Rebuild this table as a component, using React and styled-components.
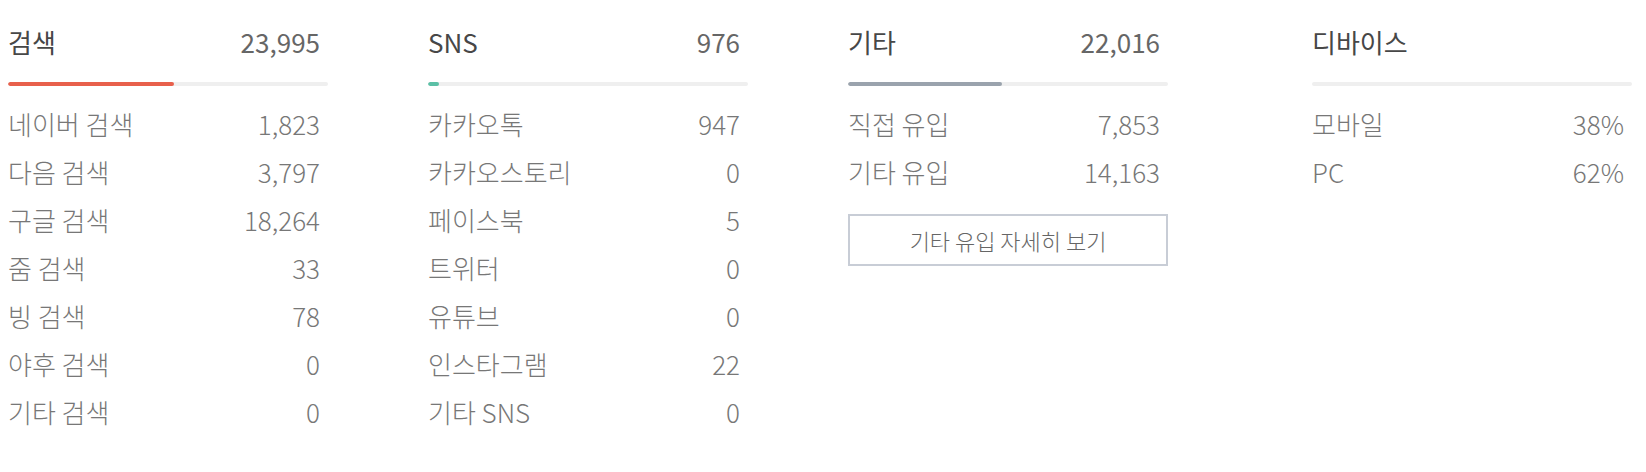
import styled, { createGlobalStyle } from "styled-components";

const GlobalStyle = createGlobalStyle`
  body {
    margin: 8px;
    background: #fff;
    font-family: "Noto Sans CJK KR", "Noto Sans", sans-serif;
  }
`;

const groups = [
  {
    title: "검색",
    total: "23,995",
    fill: 52,
    color: "#e8604c",
    rows: [
      ["네이버 검색", "1,823"],
      ["다음 검색", "3,797"],
      ["구글 검색", "18,264"],
      ["줌 검색", "33"],
      ["빙 검색", "78"],
      ["야후 검색", "0"],
      ["기타 검색", "0"],
    ],
  },
  {
    title: "SNS",
    total: "976",
    fill: 3.5,
    color: "#5bc0a6",
    rows: [
      ["카카오톡", "947"],
      ["카카오스토리", "0"],
      ["페이스북", "5"],
      ["트위터", "0"],
      ["유튜브", "0"],
      ["인스타그램", "22"],
      ["기타 SNS", "0"],
    ],
  },
  {
    title: "기타",
    total: "22,016",
    fill: 48,
    color: "#9aa3ad",
    rows: [
      ["직접 유입", "7,853"],
      ["기타 유입", "14,163"],
    ],
    more: "기타 유입 자세히 보기",
  },
  {
    title: "디바이스",
    total: "",
    fill: 0,
    color: "#9aa3ad",
    rows: [
      ["모바일", "38%"],
      ["PC", "62%"],
    ],
    offset: 44,
  },
];

const App = () => {
  return (
    <>
      <GlobalStyle />
      <Wrapper>
        {groups.map((group, index) => (
          <Column key={index} $offset={group.offset}>
            <Header>
              <Title>{group.title}</Title>
              <Total>{group.total}</Total>
            </Header>
            <Track>
              <Fill style={{ width: `${group.fill}%` }} $color={group.color} />
            </Track>
            <List>
              {group.rows.map((row, i) => (
                <Row key={i}>
                  <Label>{row[0]}</Label>
                  <Value>{row[1]}</Value>
                </Row>
              ))}
            </List>
            {group.more && <MoreButton>{group.more}</MoreButton>}
          </Column>
        ))}
      </Wrapper>
    </>
  );
};

const Wrapper = styled.div`
  display: flex;
  align-items: flex-start;
  gap: 100px;
`;

const Column = styled.div`
  width: 320px;
  flex-shrink: 0;
  margin-left: ${(props) => props.$offset || 0}px;
`;

const Header = styled.div`
  display: flex;
  justify-content: space-between;
  align-items: center;
  margin-top: 9px;
  height: 48px;
  padding-right: 8px;
`;

const Title = styled.div`
  font-size: 26px;
  font-weight: 400;
  color: #474747;
`;

const Total = styled.div`
  font-size: 26px;
  font-weight: 400;
  color: #666;
`;

const Track = styled.div`
  margin-top: 17px;
  height: 4px;
  border-radius: 2px;
  background: #efefef;
  overflow: hidden;
`;

const Fill = styled.div`
  height: 100%;
  border-radius: 2px;
  background: ${(props) => props.$color};
`;

const List = styled.div`
  margin-top: 13px;
  display: flex;
  flex-direction: column;
`;

const Row = styled.div`
  display: flex;
  justify-content: space-between;
  align-items: center;
  height: 48px;
  padding-right: 8px;
  font-size: 26px;
  font-weight: 300;
  color: #777;
`;

const Label = styled.span``;

const Value = styled.span``;

const MoreButton = styled.button`
  display: block;
  margin-top: 19px;
  width: 320px;
  height: 52px;
  background: #fff;
  border: 2px solid #c8cdd6;
  font-family: "Noto Sans CJK KR", "Noto Sans", sans-serif;
  font-size: 22px;
  font-weight: 300;
  color: #666;
  cursor: pointer;
`;

export default App;
